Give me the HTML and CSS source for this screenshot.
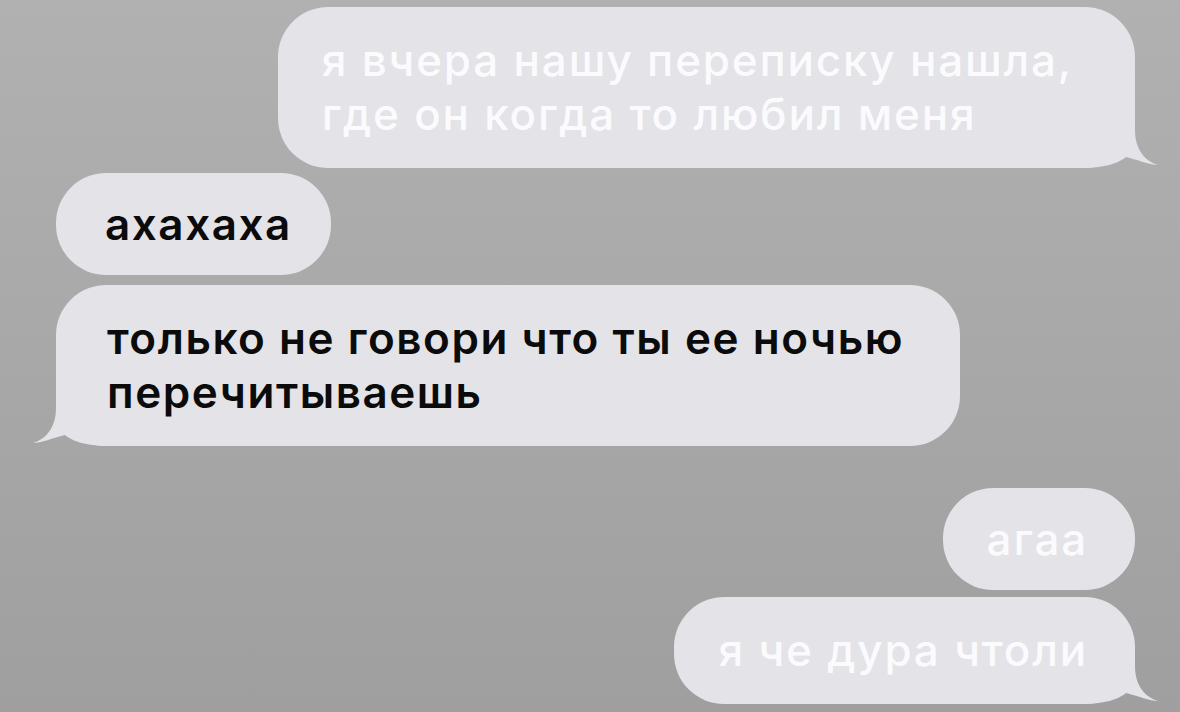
FILE: index.html
```html
<!DOCTYPE html>
<html lang="ru">
<head>
    <meta charset="UTF-8">
    <meta name="viewport" content="width=device-width, initial-scale=1.0">
    <title>Сообщения</title>
    <link rel="stylesheet" href="styles.css">
</head>
<body>
    <div class="thread">
        <div class="bubble out tailed long">
            <svg class="tail" width="80" height="50" viewBox="0 0 80 50"><path d="M0,50 L0,0 L55,0 L55,12 C55,28 62,42 78,47 C70,47 58,42 46,39 C40,44 28,50 0,50 Z"/></svg>
            <span class="text">я вчера нашу переписку нашла,<br>где он когда то любил меня</span>
        </div>
        <div class="bubble in gap-s">
            <span class="text">ахахаха</span>
        </div>
        <div class="bubble in tailed gap-m">
            <svg class="tail" width="80" height="50" viewBox="0 0 80 50"><path d="M0,50 L0,0 L55,0 L55,12 C55,28 62,42 78,47 C70,47 58,42 46,39 C40,44 28,50 0,50 Z"/></svg>
            <span class="text">только не говори что ты ее ночью<br>перечитываешь</span>
        </div>
        <div class="bubble out gap-l">
            <span class="text">агаа</span>
        </div>
        <div class="bubble out tailed gap-s2">
            <svg class="tail" width="80" height="50" viewBox="0 0 80 50"><path d="M0,50 L0,0 L55,0 L55,12 C55,28 62,42 78,47 C70,47 58,42 46,39 C40,44 28,50 0,50 Z"/></svg>
            <span class="text">я че дура чтоли</span>
        </div>
    </div>
</body>
</html>
```
FILE: styles.css
```css
body {
    margin: 0;
    height: 712px;
    overflow: hidden;
    background: linear-gradient(#b1b1b1, #9f9f9f);
    font-family: Inter, "Noto Sans", sans-serif;
}
.thread {
    display: flex;
    flex-direction: column;
    padding: 7px 45px 0 56px;
}
.bubble {
    position: relative;
    background-color: #e3e3e8;
    border-radius: 50px;
    padding: 24px 46px;
    font-size: 44px;
    line-height: 54px;
    white-space: nowrap;
}
.bubble.tailed {
    padding-top: 26px;
    padding-bottom: 27px;
}
.bubble .text {
    position: relative;
}
.bubble.out {
    align-self: flex-end;
    padding-left: 44px;
    padding-right: 47px;
    color: #fbfbfd;
    font-weight: 500;
    letter-spacing: 1.8px;
}
.bubble.out.long {
    padding-right: 62px;
}
.bubble.in {
    align-self: flex-start;
    padding-left: 49px;
    padding-right: 39px;
    color: #0b0b0b;
    font-weight: 600;
    letter-spacing: 1.55px;
}
.bubble.in.tailed {
    padding-left: 51px;
    padding-right: 56px;
}
.gap-s {
    margin-top: 5px;
}
.gap-s2 {
    margin-top: 7px;
}
.gap-m {
    margin-top: 10px;
}
.gap-l {
    margin-top: 42px;
}
.tail {
    position: absolute;
    bottom: 0;
    right: -25px;
    fill: #e3e3e8;
}
.bubble.in .tail {
    right: auto;
    left: -25px;
    transform: scaleX(-1);
}
```
